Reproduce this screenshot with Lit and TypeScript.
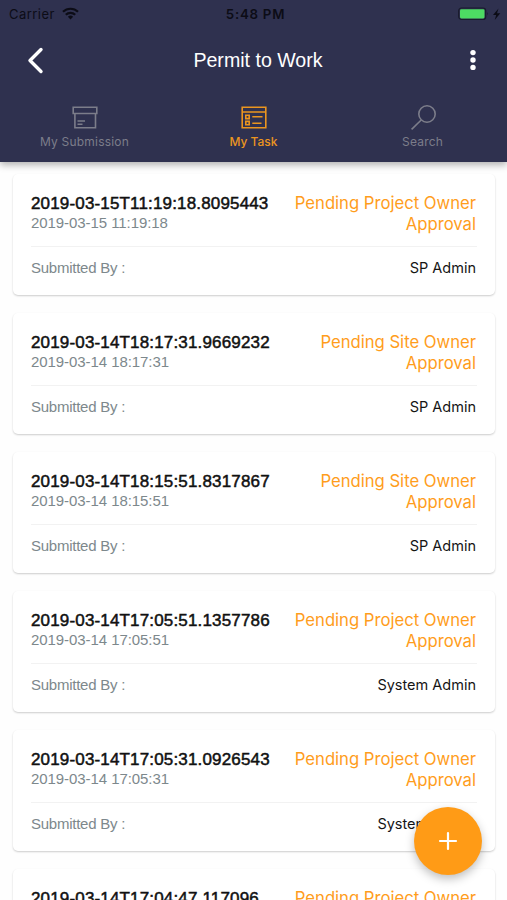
import { LitElement, html, css, svg } from "lit";
import { customElement, property } from "lit/decorators.js";

interface Permit {
  id: string;
  date: string;
  status: string;
  by: string;
}

const permits: Permit[] = [
  { id: "2019-03-15T11:19:18.8095443", date: "2019-03-15 11:19:18", status: "Pending Project Owner Approval", by: "SP Admin" },
  { id: "2019-03-14T18:17:31.9669232", date: "2019-03-14 18:17:31", status: "Pending Site Owner Approval", by: "SP Admin" },
  { id: "2019-03-14T18:15:51.8317867", date: "2019-03-14 18:15:51", status: "Pending Site Owner Approval", by: "SP Admin" },
  { id: "2019-03-14T17:05:51.1357786", date: "2019-03-14 17:05:51", status: "Pending Project Owner Approval", by: "System Admin" },
  { id: "2019-03-14T17:05:31.0926543", date: "2019-03-14 17:05:31", status: "Pending Project Owner Approval", by: "System Admin" },
  { id: "2019-03-14T17:04:47.117096", date: "2019-03-14 17:04:47", status: "Pending Project Owner Approval", by: "System Admin" },
];

const icons = {
  box: svg`<path d="M1.2 1.2h23.6v6.3H1.2zM2.9 7.5v14.3h20.6V7.5M5.5 15h7.5M5.5 18.2h5"/>`,
  task: svg`<path d="M1.2 1.2h23.6v20.6H1.2zM1.2 6h23.6M4.8 9.2h3.4v3.4H4.8zM4.8 15.4h3.4v3.4H4.8zM11.3 10.7h10.2M11.3 17.2h9.2"/>`,
  search: svg`<circle cx="17" cy="8" r="8.2"/><path d="M11.2 14L1.6 23.4"/>`,
};

@customElement("permit-card")
export class PermitCard extends LitElement {
  @property({ attribute: false }) permit!: Permit;

  static styles = css`
    :host {
      display: block;
      box-sizing: border-box;
      flex: none;
      height: 121px;
      padding: 19px 18px 0;
      border-radius: 5px;
      background: #fff;
      box-shadow: 0 1px 2px rgba(0, 0, 0, 0.2);
      font-family: "Liberation Sans", Arial, sans-serif;
    }
    .top {
      display: flex;
      justify-content: space-between;
      height: 54px;
      box-sizing: border-box;
      border-bottom: 1px solid #f2f2f2;
    }
    .id {
      font-size: 17px;
      line-height: 21px;
      letter-spacing: 0.16px;
      color: #111;
      -webkit-text-stroke: 0.5px #111;
      white-space: nowrap;
    }
    .date {
      font-size: 15px;
      line-height: 18px;
      letter-spacing: -0.07px;
      color: #7d888c;
    }
    .status {
      width: 190px;
      font: 400 16.7px/21px Inter, sans-serif;
      letter-spacing: -0.02px;
      padding-right: 1px;
      text-align: right;
      color: #ff9d1c;
    }
    .bottom {
      display: flex;
      justify-content: space-between;
      align-items: center;
      height: 41px;
    }
    .label {
      font-size: 15px;
      letter-spacing: -0.25px;
      color: #7d888c;
    }
    .by {
      font: 400 14.5px/20px Inter, sans-serif;
      padding-right: 1px;
      color: #151515;
    }
  `;

  render() {
    const p = this.permit;
    return html`
      <div class="top">
        <div>
          <div class="id">${p.id}</div>
          <div class="date">${p.date}</div>
        </div>
        <div class="status">${p.status}</div>
      </div>
      <div class="bottom">
        <span class="label">Submitted By :</span>
        <span class="by">${p.by}</span>
      </div>
    `;
  }
}

@customElement("app-root")
export class AppRoot extends LitElement {
  static styles = css`
    :host {
      display: flex;
      flex-direction: column;
      position: relative;
      height: 900px;
      overflow: hidden;
      background: #fefefe;
      font-family: Inter, sans-serif;
    }
    header {
      position: relative;
      z-index: 1;
      flex: none;
      height: 162px;
      background: #2f314f;
      box-shadow: 0 3px 7px rgba(0, 0, 0, 0.3);
    }
    svg {
      display: block;
    }
    .statusbar {
      display: grid;
      grid-template-columns: 1fr auto 1fr;
      align-items: center;
      height: 27px;
      padding: 0 5px 0 9px;
      color: #0c0c16;
      font-size: 13px;
    }
    .carrier {
      display: flex;
      align-items: center;
      gap: 7px;
      letter-spacing: 0.45px;
    }
    .time {
      font-weight: 600;
      font-size: 13.3px;
      letter-spacing: 0.75px;
    }
    .power {
      display: flex;
      justify-content: flex-end;
    }
    .titlebar {
      display: grid;
      grid-template-columns: 56px 1fr 56px;
      align-items: center;
      height: 66px;
      color: #fff;
    }
    .back {
      padding-left: 27px;
    }
    .more {
      justify-self: end;
      padding-right: 30px;
    }
    .title {
      text-align: center;
      font-family: "Liberation Sans", Arial, sans-serif;
      font-size: 19.6px;
      padding-left: 9px;
    }
    .tabs {
      display: grid;
      grid-template-columns: repeat(3, 1fr);
      height: 69px;
    }
    .tab {
      display: flex;
      flex-direction: column;
      align-items: center;
      gap: 3px;
      padding-top: 12px;
      color: #7c7d8a;
      font-size: 12px;
      line-height: 18px;
      letter-spacing: 0.2px;
    }
    .tab svg {
      fill: none;
      stroke: currentColor;
      stroke-width: 1.6;
    }
    .active {
      color: #eb951f;
      font-weight: 500;
      letter-spacing: 0;
    }
    .list {
      display: flex;
      flex-direction: column;
      gap: 18px;
      padding: 12px 12px 0 13px;
    }
    .fab {
      position: absolute;
      z-index: 2;
      right: 25px;
      bottom: 25px;
      display: grid;
      place-items: center;
      width: 68px;
      height: 68px;
      border: 0;
      padding: 0;
      border-radius: 50%;
      background: #ff9b16;
      box-shadow: 0 4px 10px rgba(0, 0, 0, 0.25);
    }
  `;

  private tab(label: string, icon: unknown, active = false) {
    return html`<div class="tab ${active ? "active" : ""}">
      <svg width="26" height="25" viewBox="0 -1 26 25" overflow="visible">${icon}</svg>
      <span>${label}</span>
    </div>`;
  }

  render() {
    return html`
      <header>
        <div class="statusbar">
          <div class="carrier">
            <span>Carrier</span>
            <svg width="17" height="13" viewBox="0 0 17 13" fill="none" stroke="#0c0c16" stroke-width="2.2">
              <path d="M1 4.8a10.7 10.7 0 0 1 15 0M3.8 7.8a6.7 6.7 0 0 1 9.4 0" />
              <path d="M5.9 9.7a3.8 3.8 0 0 1 5.2 0L8.5 12.4z" fill="#0c0c16" stroke="none" />
            </svg>
          </div>
          <span class="time">5:48 PM</span>
          <div class="power">
            <svg width="44" height="14" viewBox="0 0 44 14">
              <rect x="0.7" y="1" width="27" height="11.5" rx="2.8" fill="none" stroke="#191b2c" stroke-width="1.2" />
              <rect x="2" y="2.2" width="24.5" height="9.2" rx="1.3" fill="#4ddb63" />
              <path d="M29.3 5v3.6q1.6-1.8 0-3.6z" fill="#191b2c" />
              <path d="M40.5 1.5L35 8h3.2l-1.5 5 5.6-6.7H39z" fill="#0c0c16" />
            </svg>
          </div>
        </div>
        <div class="titlebar">
          <svg class="back" width="17" height="27" viewBox="0 0 17 27">
            <path d="M14 2.5L3 13.5 14 24.5" fill="none" stroke="#fff" stroke-width="3.4" stroke-linecap="round" stroke-linejoin="round" />
          </svg>
          <span class="title">Permit to Work</span>
          <svg class="more" width="8" height="22" viewBox="0 0 8 22" fill="#fff">
            <circle cx="4" cy="3.6" r="2.7" />
            <circle cx="4" cy="11" r="2.7" />
            <circle cx="4" cy="18.4" r="2.7" />
          </svg>
        </div>
        <div class="tabs">
          ${this.tab("My Submission", icons.box)}
          ${this.tab("My Task", icons.task, true)}
          ${this.tab("Search", icons.search)}
        </div>
      </header>
      <div class="list">
        ${permits.map((p) => html`<permit-card .permit=${p}></permit-card>`)}
      </div>
      <button class="fab" aria-label="Add">
        <svg width="20" height="20" viewBox="0 0 20 20" stroke="#fff" stroke-width="2.2" stroke-linecap="round">
          <path d="M10 2v16M2 10h16" />
        </svg>
      </button>
    `;
  }
}
